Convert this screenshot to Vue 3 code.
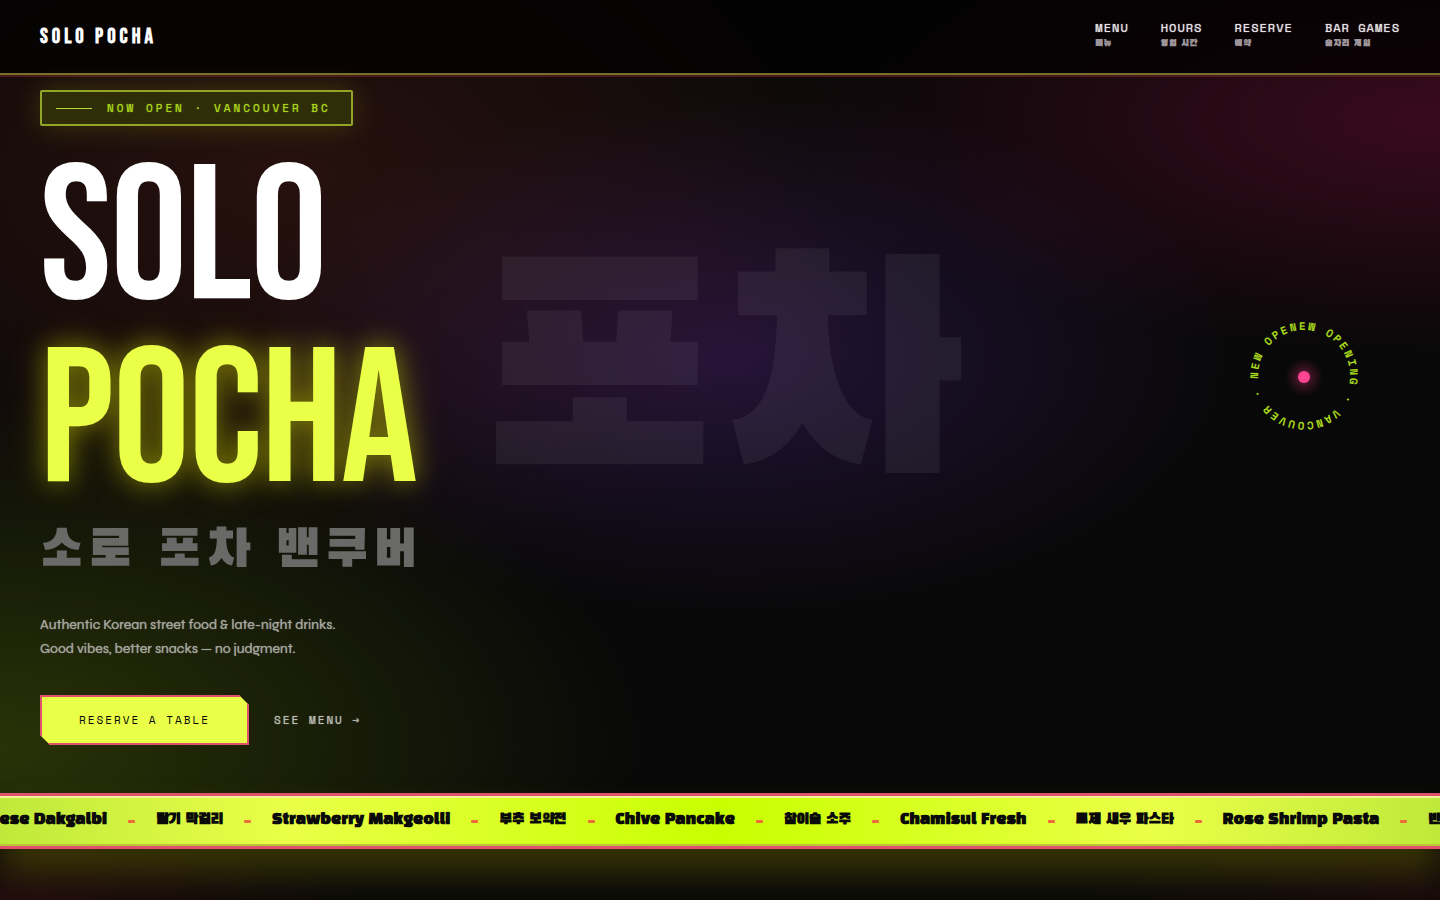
<script setup>
const links = [
  { en: 'MENU', ko: '메뉴' },
  { en: 'HOURS', ko: '영업 시간' },
  { en: 'RESERVE', ko: '예약' },
  { en: 'BAR GAMES', ko: '술자리 게임' },
]

const dishes = [
  { name: 'Cheese Dakgalbi' },
  { name: '딸기 막걸리' },
  { name: 'Strawberry Makgeolli' },
  { name: '부추 보약전' },
  { name: 'Chive Pancake' },
  { name: '참이슬 소주' },
  { name: 'Chamisul Fresh' },
  { name: '로제 새우 파스타' },
  { name: 'Rose Shrimp Pasta' },
  { name: '반반 치킨' },
]
</script>

<template>
  <div class="page">
    <div class="stage">
      <header class="bar">
        <a class="logo" href="#">SOLO POCHA</a>
        <nav class="nav" aria-label="Main">
          <a v-for="l in links" :key="l.en" class="nav-link" href="#">
            <span>{{ l.en }}</span>
            <span class="nav-ko" lang="ko">{{ l.ko }}</span>
          </a>
        </nav>
      </header>

      <main class="hero">
        <div class="ghost" lang="ko" aria-hidden="true">포차</div>
        <p class="badge"><span class="badge-line"></span>NOW OPEN · VANCOUVER BC</p>
        <h1 class="title">
          <span class="title-a">SOLO</span>
          <span class="title-b">POCHA</span>
        </h1>
        <p class="sub" lang="ko">소로 포차 밴쿠버</p>
        <p class="lead">
          Authentic Korean street food &amp; late-night drinks.<br />
          Good vibes, better snacks — no judgment.
        </p>
        <div class="actions">
          <button class="cta" type="button">RESERVE A TABLE</button>
          <a class="see" href="#">SEE MENU →</a>
        </div>
        <svg class="seal" viewBox="0 0 120 120" role="img" aria-label="New opening, Vancouver">
          <defs>
            <path id="ring" d="M60 14 A46 46 0 0 1 60 106 A46 46 0 0 1 60 14" />
            <radialGradient id="halo">
              <stop offset="0" stop-color="#ff3d8b" stop-opacity=".5" />
              <stop offset=".5" stop-color="#ff3d8b" stop-opacity=".16" />
              <stop offset="1" stop-color="#ff3d8b" stop-opacity="0" />
            </radialGradient>
          </defs>
          <g transform="rotate(-17 60 60)">
            <text class="seal-text">
              <textPath href="#ring">NEW OPENING · VANCOUVER · NEW OPE</textPath>
            </text>
          </g>
          <circle cx="60" cy="61" r="19" fill="url(#halo)" />
          <circle cx="60" cy="61" r="6" fill="#ff4591" />
        </svg>
      </main>
    </div>

    <div class="ticker">
      <ul class="track">
        <li v-for="d in dishes" :key="d.name" class="dish">{{ d.name }}</li>
      </ul>
    </div>
    <section class="next"></section>
  </div>
</template>

<style>
body {
  background: #080808;
  overflow: hidden;
}
</style>

<style scoped>
.page {
  --lime: #eaff47;
  --pink: #e0526b;
  --mono: 'Space Mono', 'DejaVu Sans Mono', 'Liberation Mono', monospace;
  --narrow: 'Bebas Neue', 'Liberation Sans Narrow', sans-serif;
  --ko: 'Black Han Sans', 'Noto Sans CJK KR', sans-serif;
  min-height: 100vh;
  display: flex;
  flex-direction: column;
  background: #080808;
  color: #fff;
  font-family: Syne, Inter, 'Liberation Sans', sans-serif;
}
.stage {
  flex: 1;
  background:
    radial-gradient(ellipse 45% 30% at 100% 15%, rgba(255, 20, 110, 0.2), transparent),
    radial-gradient(ellipse 35% 33% at 51% 45%, rgba(110, 50, 190, 0.26), transparent),
    radial-gradient(ellipse 45% 50% at 20% 22%, rgba(190, 60, 45, 0.17), transparent),
    radial-gradient(ellipse 45% 44% at 0% 94%, rgba(170, 220, 0, 0.2), transparent),
    #080808;
}
a {
  color: inherit;
  text-decoration: none;
}
.bar {
  display: flex;
  justify-content: space-between;
  align-items: center;
  height: 73px;
  padding: 0 40px;
  background: rgba(0, 0, 0, 0.72);
  border-bottom: 2px solid #76702f;
  box-shadow: 0 2px 0 #4e1a19;
}
.logo {
  font: 700 21px/24px var(--narrow);
  letter-spacing: 4px;
}
.nav {
  display: flex;
  gap: 32px;
}
.nav-link {
  display: flex;
  flex-direction: column;
  padding-bottom: 2px;
  font: 400 12px/16px var(--mono);
  letter-spacing: 1px;
  color: #e6e2e4;
  text-shadow: 0 0 1px #e6e2e4;
}
.nav-ko {
  font: 700 9px/16px var(--ko);
  letter-spacing: 1px;
  color: #9d9599;
  text-shadow: none;
}
.hero {
  position: relative;
  display: flex;
  flex-direction: column;
  align-items: flex-start;
  padding: 15px 40px 48px;
}
.hero > * {
  position: relative;
}
.hero > .ghost {
  position: absolute;
  inset: 114px 0 auto;
  text-align: center;
  font: 400 288px/400px var(--ko);
  color: rgba(255, 255, 255, 0.06);
}
.badge {
  display: flex;
  align-items: center;
  gap: 15px;
  box-sizing: border-box;
  height: 36px;
  margin: 0;
  padding: 0 20px 0 14px;
  border: 2px solid #93a524;
  border-radius: 2px;
  background: #2f2e09;
  box-shadow: 0 0 28px rgba(180, 190, 0, 0.24);
  font: 400 11px/16px var(--mono);
  letter-spacing: 3px;
  color: #a9d61a;
  text-shadow: 0 0 1px #a9d61a;
}
.badge-line {
  width: 36px;
  height: 1px;
  background: #b9dc3c;
}
.title {
  margin: 23px 0 0;
  font: 400 192px/183px var(--narrow);
  letter-spacing: -1px;
}
.title span {
  display: block;
}
.title-b {
  color: var(--lime);
  text-shadow: 0 0 24px rgba(215, 225, 0, 0.42), 0 0 40px rgba(200, 190, 0, 0.3);
}
.sub {
  margin: 7px 0 0;
  font: 400 52px/60px var(--ko);
  letter-spacing: 5px;
  color: #696967;
}
.lead {
  margin: 31px 0 0;
  font-size: 14px;
  font-weight: 400;
  line-height: 24px;
  color: #a5a69e;
  text-shadow: 0 0 1px #a5a69e;
}
.actions {
  display: flex;
  align-items: center;
  gap: 25px;
  margin-top: 34px;
}
.cta {
  box-sizing: border-box;
  height: 50px;
  padding: 0 37px;
  border: 2px solid var(--pink);
  background: var(--lime);
  clip-path: polygon(0 0, calc(100% - 10px) 0, 100% 10px, 100% 100%, 10px 100%, 0 calc(100% - 10px));
  font: 400 11px/16px var(--mono);
  letter-spacing: 2px;
  color: #080808;
}
.see {
  font: 400 11px/16px var(--mono);
  letter-spacing: 2px;
  color: #b8b9b0;
  text-shadow: 0 0 1px #b8b9b0;
}
.hero > .seal {
  position: absolute;
  top: 241px;
  right: 76px;
  width: 120px;
  height: 120px;
}
.seal-text {
  font: 700 11px var(--mono);
  letter-spacing: 2px;
  fill: #a8d81c;
}
.ticker {
  position: relative;
  border-top: 3px solid var(--pink);
  border-bottom: 3px solid var(--pink);
  background: linear-gradient(90deg, #bfe93a, #eaff47 20%, #c8ff00 50%, #eaff47 80%, #bfe93a);
  box-shadow: inset 0 2px 0 #f3f29a, inset 0 -2px 0 #bac43a, 0 24px 36px rgba(160, 150, 0, 0.32);
}
.track {
  display: flex;
  justify-content: center;
  height: 50px;
  margin: 0;
  padding: 0 0 0 12px;
  overflow: hidden;
  list-style: none;
}
.dish {
  display: flex;
  flex: none;
  align-items: center;
  padding-bottom: 3px;
  font: 700 15px/24px var(--ko);
  color: #0a0a0a;
}
.dish + .dish::before {
  content: '';
  width: 7px;
  height: 3px;
  margin: 4px 21px 0;
  border-radius: 1px;
  background: #ec6a3c;
}
.next {
  height: 51px;
  background:
    radial-gradient(ellipse 25% 120% at 0% 100%, rgba(200, 30, 50, 0.13), transparent),
    radial-gradient(ellipse 25% 120% at 100% 100%, rgba(200, 20, 60, 0.08), transparent),
    #080808;
}
</style>
